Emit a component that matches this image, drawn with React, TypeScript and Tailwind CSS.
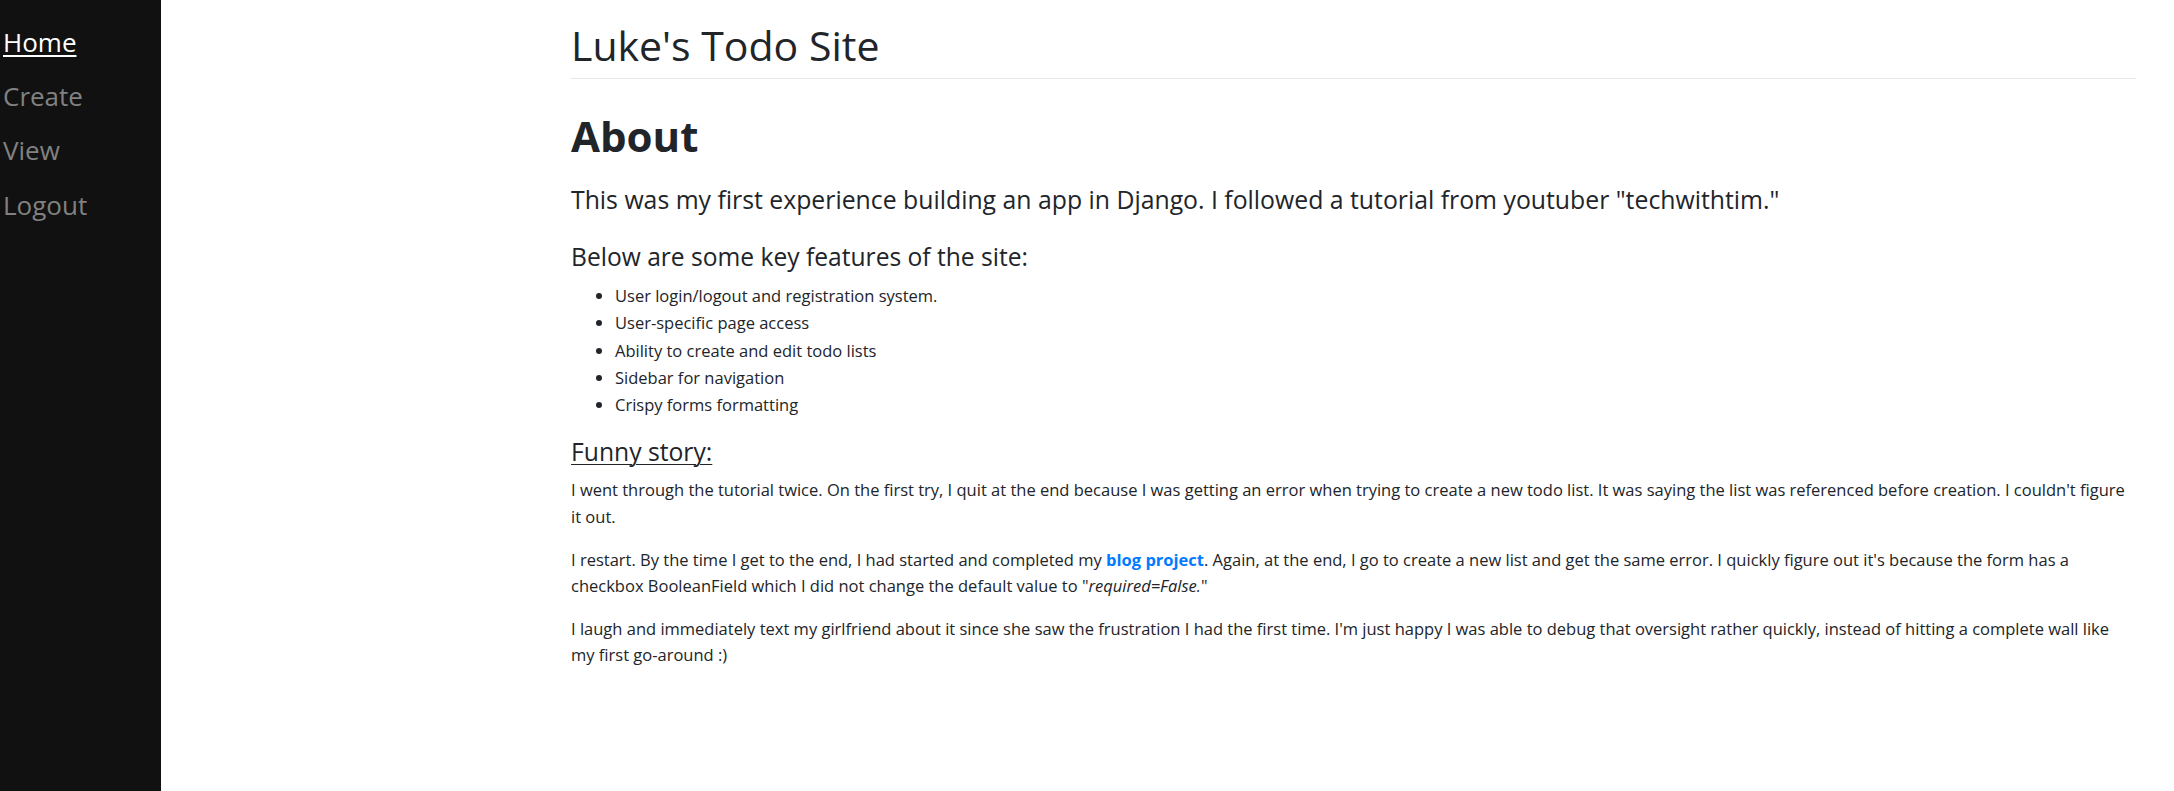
const navLinks = [
  { label: 'Home', active: true },
  { label: 'Create', active: false },
  { label: 'View', active: false },
  { label: 'Logout', active: false },
];

const features = [
  'User login/logout and registration system.',
  'User-specific page access',
  'Ability to create and edit todo lists',
  'Sidebar for navigation',
  'Crispy forms formatting',
];

function Sidebar() {
  return (
    <nav className="w-[161px] shrink-0 bg-[#111111] pt-[15px] pl-[3px]">
      {navLinks.map((link) => (
        <a
          key={link.label}
          href="#"
          className={
            link.active
              ? 'block text-[26px] leading-[54.2px] text-white underline decoration-[2px] underline-offset-[3px]'
              : 'block text-[26px] leading-[54.2px] text-[#818181]'
          }
        >
          {link.label}
        </a>
      ))}
    </nav>
  );
}

export default function App() {
  return (
    <div className="flex min-h-screen bg-white font-['Open_Sans',sans-serif] text-[#212529]">
      <Sidebar />
      <main className="flex-1 pl-[410px] pr-[38px] pt-[21px]">
        <h1 className="text-[41px] leading-[49px]">Luke's Todo Site</h1>
        <hr className="mt-[8px] border-t border-[#e6e6e6]" />

        <h1 className="mt-[32px] text-[42px] leading-[49px] font-bold">About</h1>
        <p className="mt-[23px] text-[24.8px] leading-[33px]">
          This was my first experience building an app in Django. I followed a tutorial from youtuber "techwithtim."
        </p>

        <h4 className="mt-[25px] text-[24.6px] leading-[32px]">Below are some key features of the site:</h4>
        <ul className="mt-[9px] list-disc pl-[44px] text-[16.5px] leading-[27.25px]">
          {features.map((f) => (
            <li key={f}>{f}</li>
          ))}
        </ul>

        <h5 className="mt-[19px] text-[24.7px] leading-[30px] underline decoration-1 underline-offset-[3px]">
          Funny story:
        </h5>
        <div className="mt-[10px] text-[16.5px] leading-[26.4px]">
          <p>
            I went through the tutorial twice. On the first try, I quit at the end because I was getting an error when
            trying to create a new todo list. It was saying the list was referenced before creation. I couldn't figure
            it out.
          </p>
          <p className="mt-[16.5px]">
            I restart. By the time I get to the end, I had started and completed my{' '}
            <a href="#" className="font-bold text-[#007bff]">
              blog project
            </a>
            . Again, at the end, I go to create a new list and get the same error. I quickly figure out it's because the
            form has a checkbox BooleanField which I did not change the default value to "<em>required=False.</em>"
          </p>
          <p className="mt-[16.5px]">
            I laugh and immediately text my girlfriend about it since she saw the frustration I had the first time. I'm
            just happy I was able to debug that oversight rather quickly, instead of hitting a complete wall like my
            first go-around :)
          </p>
        </div>
      </main>
    </div>
  );
}
